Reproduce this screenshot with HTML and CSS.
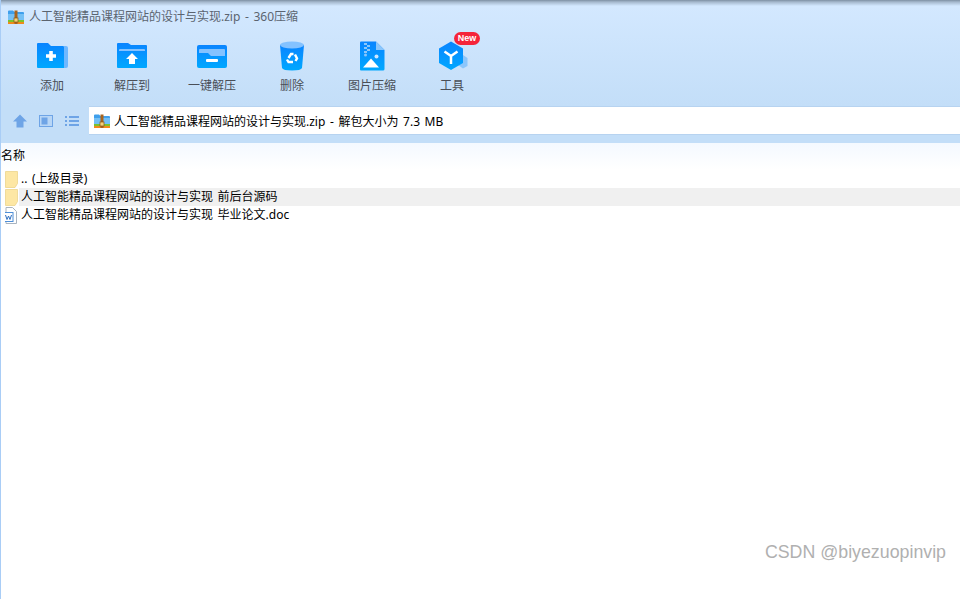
FILE: index.html
```html
<!DOCTYPE html>
<html lang="zh">
<head>
<meta charset="utf-8">
<title>360压缩</title>
<link rel="stylesheet" href="styles.css">
</head>
<body>
<div class="window">
  <header class="chrome">
    <div class="titlebar">
      <svg class="zip-icon" viewBox="0 0 16 14"><path fill="#3f9fec" d="M0 1.500Q0 .5 1 .5H5L6.500 2H15Q16 2 16 3V10H0Z"/><path fill="#74c0f5" d="M0 4H16V10H0Z"/><rect y="10" width="16" height="2" fill="#7cc22e"/><rect y="12" width="16" height="2" fill="#ef8a1d"/><rect x="6.500" y="0.500" width="3" height="13.500" fill="#a8641e"/><rect x="6" y="8" width="4" height="4" fill="#f3d27a" stroke="#8a5414" stroke-width=".7"/></svg>
      <span>人工智能精品课程网站的设计与实现.zip - 360压缩</span>
    </div>
    <nav class="toolbar">
      <div class="tool">
        <svg class="tool-icon" viewBox="-1 0 32 26"><defs><linearGradient id="g" x1="0" y1="0" x2="0" y2="1"><stop offset="0" stop-color="#0a84ff"/><stop offset="1" stop-color="#00a8ff"/></linearGradient></defs><path fill="url(#g)" d="M1 0H11L14 3H26Q27 3 27 4V25H1Q0 25 0 24V1Q0 0 1 0Z"/><path fill="#6fb8ff" d="M27 3H29Q31 3 31 5V23Q31 25 29 25H27Z"/><path fill="#fff" d="M12.200 8H15.800V11.200H19V14.800H15.800V18H12.200V14.800H9V11.200H12.200Z"/></svg>
        <span class="tool-label">添加</span>
      </div>
      <div class="tool">
        <svg class="tool-icon" viewBox="-1 0 32 26"><path fill="url(#g)" d="M1 0H11L14 2H29Q30 2 30 3V24Q30 25 29 25H1Q0 25 0 24V1Q0 0 1 0Z"/><path fill="#84c2ff" d="M2 8V7Q2 6 3 6H27Q28 6 28 7V8Z"/><path fill="#fff" d="M15 10L21 16H18V21H12V16H9Z"/></svg>
        <span class="tool-label">解压到</span>
      </div>
      <div class="tool">
        <svg class="tool-icon" viewBox="-1 0 32 26"><path fill="url(#g)" d="M2 2H28Q30 2 30 4V23Q30 25 28 25H2Q0 25 0 23V4Q0 2 2 2Z"/><path fill="#84c2ff" d="M2 7Q2 6 3 6H27Q28 6 28 7V13H14L11 10H2Z"/><rect x="9" y="16" width="12" height="3" rx="1" fill="#fff"/></svg>
        <span class="tool-label">一键解压</span>
      </div>
      <div class="tool">
        <svg class="tool-icon" viewBox="0 0 32 30"><path fill="url(#g)" d="M4 4H28L26 27Q25 29.500 16 29.500Q7 29.500 6 27Z"/><ellipse cx="16" cy="4" rx="12" ry="3.500" fill="#84c2ff"/><g fill="none" stroke="#fff" stroke-width="2.400"><path d="M12.500 17L15 13H17.500"/><path d="M19 13.500L21 17.500L19.500 20"/><path d="M17 21H12.500L11 18.500"/></g></svg>
        <span class="tool-label">删除</span>
      </div>
      <div class="tool">
        <svg class="tool-icon" viewBox="0 0 32 30"><path fill="url(#g)" d="M5 0.500H20L28.500 9V28Q28.500 29.500 27 29.500H5Q4 29.500 4 28.500V1.500Q4 .5 5 .5Z"/><path fill="#8cc6fb" d="M20 .5L28.500 9H20Z"/><g fill="#8cc6fb"><rect x="8" y="2" width="3" height="2"/><rect x="11" y="4" width="3" height="2"/><rect x="8" y="6" width="3" height="2"/><rect x="11" y="8" width="3" height="2"/><rect x="8" y="10" width="3" height="2"/><circle cx="9.500" cy="14" r="1.500"/></g><circle cx="20.500" cy="15.500" r="2" fill="#cfe7ff"/><path fill="#fff" d="M7 26.500L15 17.500L23 26.500Z"/></svg>
        <span class="tool-label">图片压缩</span>
      </div>
      <div class="tool">
        <span class="tool-stack">
          <svg class="tool-icon" viewBox="-2 0 32 30"><path fill="#8cc6fb" d="M25 14L29.500 17V25L25 27.500L20 24V17Z"/><path fill="url(#g)" d="M13 .5L25 7.500V22L13 29L1 22V7.500Z"/><path fill="none" stroke="#fff" stroke-width="2.500" d="M13 15V23M13 15L6.500 10.500M13 15L19.500 10.500"/></svg>
          <b class="new-badge">New</b>
        </span>
        <span class="tool-label">工具</span>
      </div>
    </nav>
    <div class="addressrow">
      <div class="nav-icons">
        <svg viewBox="0 0 14 14"><path fill="#6ea4e6" d="M7 0.500L14 7.500H10.500V13.500H3.500V7.500H0Z"/></svg>
        <svg viewBox="0 0 14 14"><rect x=".5" y="1.500" width="13" height="11" fill="#b8d6f6" stroke="#6ea4e6"/><rect x="2.500" y="3.500" width="6" height="7" fill="#6ea4e6"/></svg>
        <svg viewBox="0 0 14 14"><g fill="#6ea4e6"><rect y="2" width="2" height="2"/><rect y="6" width="2" height="2"/><rect y="10" width="2" height="2"/><rect x="4" y="2" width="10" height="2"/><rect x="4" y="6" width="10" height="2"/><rect x="4" y="10" width="10" height="2"/></g></svg>
      </div>
      <div class="address">
        <svg class="zip-icon" viewBox="0 0 16 14"><path fill="#3f9fec" d="M0 1.500Q0 .5 1 .5H5L6.500 2H15Q16 2 16 3V10H0Z"/><path fill="#74c0f5" d="M0 4H16V10H0Z"/><rect y="10" width="16" height="2" fill="#7cc22e"/><rect y="12" width="16" height="2" fill="#ef8a1d"/><rect x="6.500" y="0.500" width="3" height="13.500" fill="#a8641e"/><rect x="6" y="8" width="4" height="4" fill="#f3d27a" stroke="#8a5414" stroke-width=".7"/></svg>
        <span>人工智能精品课程网站的设计与实现.zip - 解包大小为 7.3 MB</span>
      </div>
    </div>
  </header>
  <main class="list">
    <div class="list-head">名称</div>
    <div class="rows">
      <div class="row">
        <svg class="file-icon" viewBox="0 0 14 17"><path fill="#fde7a4" stroke="#ecd48c" stroke-width=".8" d="M.5.5H12.500V12.500L10 16.500H.5Z"/></svg>
        <span class="row-text">.. (上级目录)</span>
      </div>
      <div class="row selected">
        <svg class="file-icon" viewBox="0 0 14 17"><path fill="#fde7a4" stroke="#ecd48c" stroke-width=".8" d="M.5.5H12.500V12.500L10 16.500H.5Z"/></svg>
        <span class="row-text">人工智能精品课程网站的设计与实现 前后台源码</span>
      </div>
      <div class="row">
        <svg class="file-icon" viewBox="1.500 0 14 17"><path fill="#fff" stroke="#a9b4c0" d="M2.500.5H9L13 4.500V16.500H2.500Z"/><rect x=".5" y="5.500" width="9" height="9" fill="#fff" stroke="#4f8fd8"/><path fill="none" stroke="#2f6fc0" d="M2 8L3.500 12.500L5 9L6.500 12.500L8 8"/></svg>
        <span class="row-text">人工智能精品课程网站的设计与实现 毕业论文.doc</span>
      </div>
    </div>
  </main>
  <div class="watermark">CSDN @biyezuopinvip</div>
</div>
</body>
</html>
```

FILE: styles.css
```css
* { box-sizing: border-box; }
html, body { margin: 0; height: 100%; overflow: hidden; background: #fff; }
body { font: 12px/18px "Noto Sans", "Noto Sans CJK SC", sans-serif; color: #000; word-spacing: 1.500px; }
.window { position: relative; height: 599px; border-left: 1px solid #a9cdf6; display: flex; flex-direction: column; }
.chrome { height: 143px; flex: none; padding-top: 3px; background: linear-gradient(#7d8fa3 0, #a5b8cd 2px, #d3e8ff 6px, #c3def8 106px, #c3def8 100%); }
.titlebar { height: 28px; display: flex; align-items: center; gap: 5px; padding-left: 7px; color: #5b6470; margin-bottom: 10px; }
.zip-icon { width: 16px; height: 14px; flex: none; }
.toolbar { height: 65px; display: flex; padding-left: 11px; }
.tool { width: 80px; display: flex; flex-direction: column; align-items: center; color: #4a4f57; }
.tool-label { margin-top: 6px; line-height: 18px; }
.tool-stack { position: relative; display: block; height: 30px; }
.tool-icon { width: 32px; height: 30px; display: block; flex: none; }
.new-badge { position: absolute; left: 18px; top: -9px; width: 26px; height: 13px; border-radius: 7px; background: #f5243a; color: #fff; font: 700 9px/13px "Liberation Sans", sans-serif; text-align: center; }
.addressrow { height: 37px; display: flex; padding-bottom: 8px; }
.nav-icons { width: 88px; flex: none; display: flex; align-items: center; gap: 12px; padding-left: 12px; }
.nav-icons svg { width: 14px; height: 14px; flex: none; }
.address { flex: 1; background: #fff; border-top: 1px solid #b7d3f0; border-bottom: 1px solid #b7d3f0; display: flex; align-items: center; gap: 4px; padding-left: 5px; line-height: 20px; }
.address span { padding-top: 3px; }
.list { flex: 1; }
.list-head { height: 27px; background: linear-gradient(#f4f9ff, #fff); padding-top: 4px; }
.row { height: 18px; display: flex; align-items: center; padding-left: 4px; }
.row-text { padding-left: 2px; flex: 1; white-space: nowrap; }
.selected .row-text { background: #f0f0f0; }
.file-icon { width: 14px; height: 17px; flex: none; }
.watermark { position: absolute; right: 14px; bottom: 37px; font: 17.800px/20px "Liberation Sans", sans-serif; color: #b0b0b0; word-spacing: 0; }
```
